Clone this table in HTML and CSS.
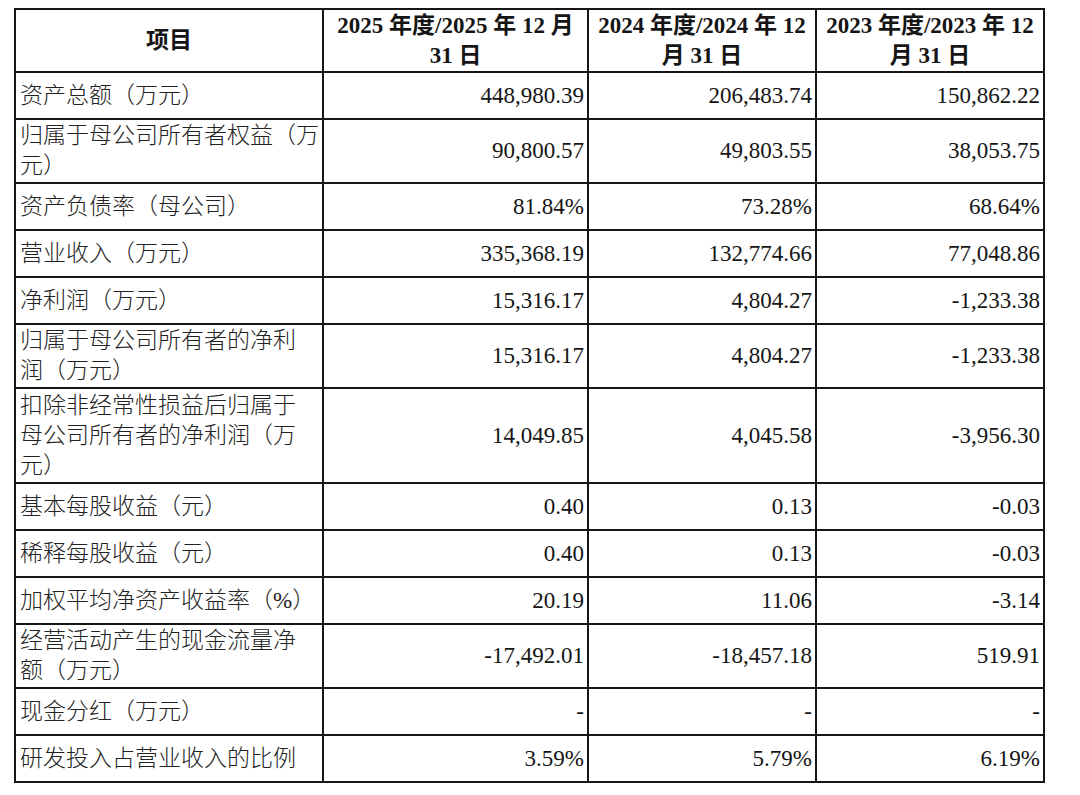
FILE: index.html
```html
<!DOCTYPE html>
<html lang="zh-CN">
<head>
<meta charset="utf-8">
<title>主要财务数据</title>
<link rel="stylesheet" href="styles.css">
</head>
<body>
<div class="page">
<table class="fin">
  <colgroup>
    <col class="c-item">
    <col class="c-y1">
    <col class="c-y2">
    <col class="c-y3">
  </colgroup>
  <thead>
    <tr class="hd">
      <th>项目</th>
      <th>2025 年度/2025 年 12 月<br>31 日</th>
      <th>2024 年度/2024 年 12<br>月 31 日</th>
      <th>2023 年度/2023 年 12<br>月 31 日</th>
    </tr>
  </thead>
  <tbody>
    <tr class="r1"><td class="lbl">资产总额（万元）</td><td>448,980.39</td><td>206,483.74</td><td>150,862.22</td></tr>
    <tr class="r2"><td class="lbl">归属于母公司所有者权益（万<br>元）</td><td>90,800.57</td><td>49,803.55</td><td>38,053.75</td></tr>
    <tr class="r1"><td class="lbl">资产负债率（母公司）</td><td>81.84%</td><td>73.28%</td><td>68.64%</td></tr>
    <tr class="r1"><td class="lbl">营业收入（万元）</td><td>335,368.19</td><td>132,774.66</td><td>77,048.86</td></tr>
    <tr class="r1"><td class="lbl">净利润（万元）</td><td>15,316.17</td><td>4,804.27</td><td>-1,233.38</td></tr>
    <tr class="r2"><td class="lbl">归属于母公司所有者的净利<br>润（万元）</td><td>15,316.17</td><td>4,804.27</td><td>-1,233.38</td></tr>
    <tr class="r3"><td class="lbl">扣除非经常性损益后归属于<br>母公司所有者的净利润（万<br>元）</td><td>14,049.85</td><td>4,045.58</td><td>-3,956.30</td></tr>
    <tr class="r1"><td class="lbl">基本每股收益（元）</td><td>0.40</td><td>0.13</td><td>-0.03</td></tr>
    <tr class="r1"><td class="lbl">稀释每股收益（元）</td><td>0.40</td><td>0.13</td><td>-0.03</td></tr>
    <tr class="r1"><td class="lbl">加权平均净资产收益率（%）</td><td>20.19</td><td>11.06</td><td>-3.14</td></tr>
    <tr class="r2"><td class="lbl">经营活动产生的现金流量净<br>额（万元）</td><td>-17,492.01</td><td>-18,457.18</td><td>519.91</td></tr>
    <tr class="r1"><td class="lbl">现金分红（万元）</td><td>-</td><td>-</td><td>-</td></tr>
    <tr class="r1"><td class="lbl">研发投入占营业收入的比例</td><td>3.59%</td><td>5.79%</td><td>6.19%</td></tr>
  </tbody>
</table>
</div>
</body>
</html>
```

FILE: styles.css
```css
html, body {
  margin: 0;
  padding: 0;
  background: #ffffff;
}

.page {
  padding: 8px 0 0 14px;
}

.fin {
  border-collapse: collapse;
  table-layout: fixed;
  width: 1030px;
  font-family: "Liberation Serif", "Noto Sans CJK SC", serif;
  font-size: 23px;
  color: #151515;
}

.c-item { width: 308px; }
.c-y1 { width: 265px; }
.c-y2 { width: 228px; }
.c-y3 { width: 228px; }

.fin th,
.fin td {
  border: 2px solid #161616;
  padding: 1px 3px 1px 4px;
  vertical-align: middle;
  line-height: 30px;
}

.fin th {
  font-weight: bold;
  text-align: center;
  line-height: 30px;
  padding: 0 4px;
  white-space: nowrap;
}

.fin td {
  text-align: right;
  font-weight: normal;
}

.fin td.lbl {
  text-align: left;
  white-space: nowrap;
  font-weight: 300;
  color: #222222;
}

.hd { height: 63px; }
.r1 { height: 47px; }
.r2 { height: 64px; }
.r3 { height: 95px; }
```
